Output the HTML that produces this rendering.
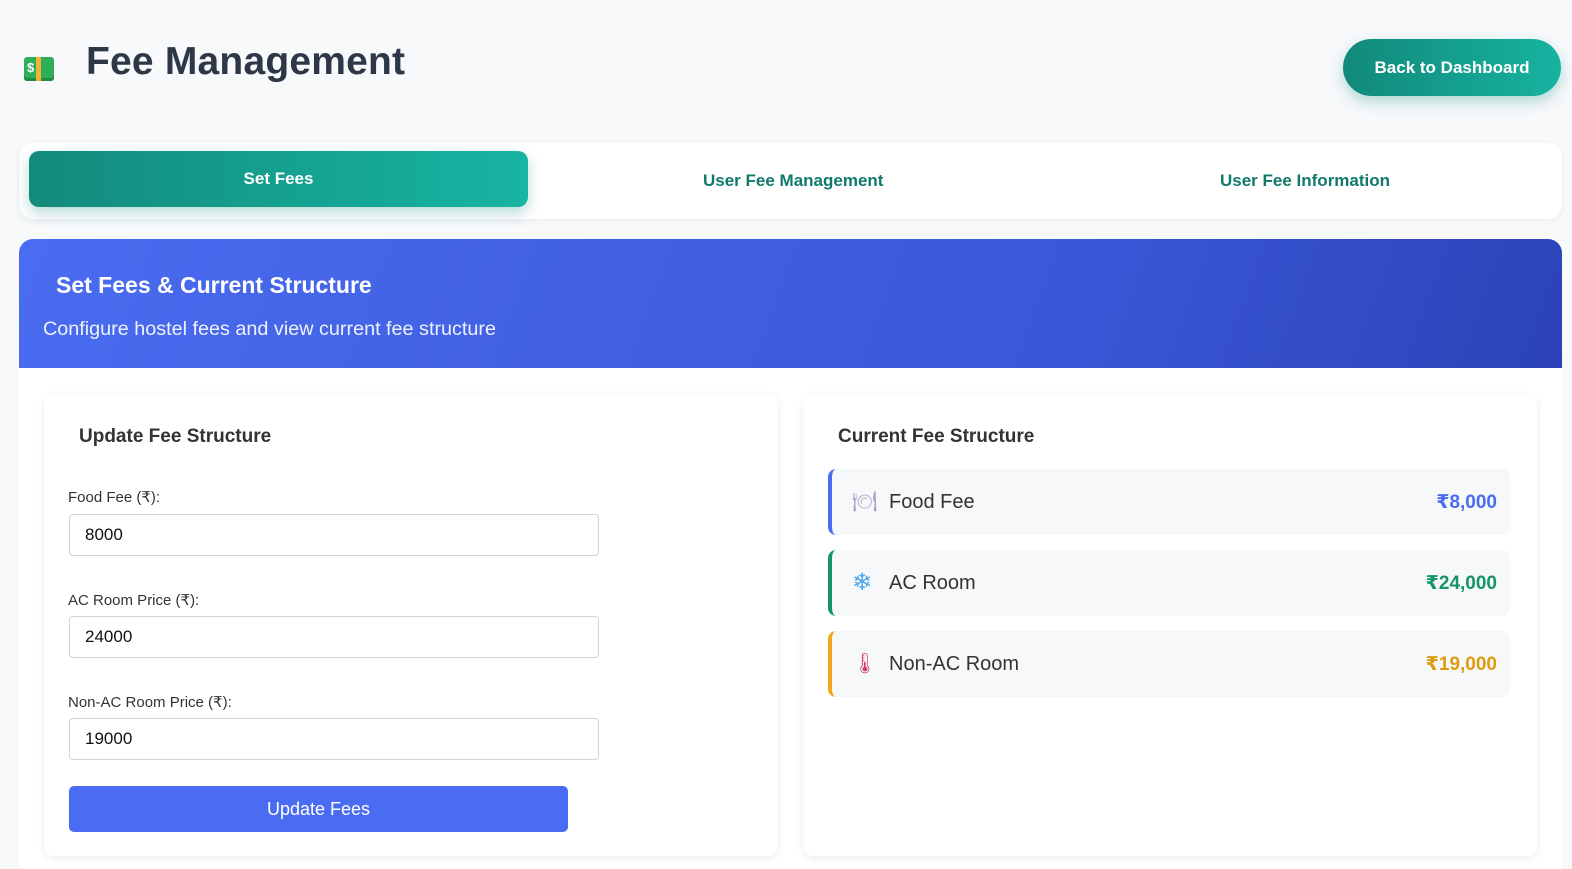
<!DOCTYPE html>
<html><head><meta charset="utf-8"><style>
*{box-sizing:border-box;margin:0;padding:0}
body{width:1572px;height:869px;overflow:hidden;background:#f7f9fb;font-family:"Liberation Sans","DejaVu Sans",sans-serif;color:#2d3748;position:relative}
.abs{position:absolute}
h1{position:absolute;left:86px;top:40px;font-size:39px;font-weight:bold;color:#2d3748;letter-spacing:0.2px}
.back{left:1343px;top:39px;width:218px;height:57px;border-radius:29px;background:linear-gradient(90deg,#11897a,#17b3a0);color:#fff;font-size:17px;font-weight:bold;text-align:center;line-height:57px;box-shadow:0 6px 14px rgba(17,137,122,.3)}
.tabs{left:19px;top:143px;width:1543px;height:76px;background:#fff;border-radius:14px;box-shadow:0 2px 8px rgba(0,0,0,.05)}
.tab1{left:29px;top:151px;width:499px;height:56px;border-radius:10px;background:linear-gradient(90deg,#138a7c,#17b5a2);color:#fff;font-weight:bold;font-size:17px;text-align:center;line-height:55px;box-shadow:0 6px 14px rgba(17,137,122,.3)}
.tabt{top:171px;font-size:17px;font-weight:bold;color:#11796c}
.hero{left:19px;top:239px;width:1543px;height:129px;border-radius:14px 14px 0 0;background:linear-gradient(110deg,#4a6cf0,#3a56d6 70%,#2b43b6)}
.main{left:19px;top:368px;width:1543px;height:501px;background:#fff}
.card{top:394px;height:462px;background:#fff;border-radius:10px;box-shadow:0 2px 8px rgba(0,0,0,.08)}
.lbl{left:68px;font-size:15px;color:#333}
.inp{left:69px;width:530px;height:42px;border:1px solid #d0d4da;border-radius:4px;font-size:17px;padding-left:15px;line-height:40px;color:#111}
.row{left:828px;width:682px;height:66px;background:#f6f8fa;border-radius:8px;border-left:4px solid}
.row .ic{position:absolute;left:20px;top:21px;font-size:20px;line-height:24px}
.row .n{position:absolute;left:57px;top:22px;font-size:20px;color:#333}
.row .v{position:absolute;right:13px;top:22px;font-size:19px;font-weight:bold}
</style></head><body>
<div class="abs" style="left:24px;top:57px;width:30px;height:24px;background:#2fae5a;border-radius:3px;box-shadow:inset 0 -3px 0 #1f8a44"><div style="position:absolute;left:12px;top:0;width:5px;height:24px;background:#f2b233"></div><span style="position:absolute;left:3px;top:3px;font-size:13px;color:#fff;font-weight:bold">$</span></div>
<h1>Fee Management</h1>
<div class="abs back">Back to Dashboard</div>
<div class="abs tabs"></div>
<div class="abs tab1">Set Fees</div>
<div class="abs tabt" style="left:703px">User Fee Management</div>
<div class="abs tabt" style="left:1220px">User Fee Information</div>
<div class="abs hero"></div>
<div class="abs" style="left:56px;top:272px;font-size:23px;font-weight:bold;color:#fff">Set Fees &amp; Current Structure</div>
<div class="abs" style="left:43px;top:318px;font-size:19.8px;color:#eef1ff">Configure hostel fees and view current fee structure</div>
<div class="abs main"></div>
<div class="abs card" style="left:44px;width:734px"></div>
<div class="abs card" style="left:803px;width:734px"></div>
<div class="abs" style="left:79px;top:426px;font-size:19px;font-weight:bold;color:#333">Update Fee Structure</div>
<div class="abs lbl" style="top:488px">Food Fee (₹):</div>
<div class="abs inp" style="top:514px">8000</div>
<div class="abs lbl" style="top:591px">AC Room Price (₹):</div>
<div class="abs inp" style="top:616px">24000</div>
<div class="abs lbl" style="top:693px">Non-AC Room Price (₹):</div>
<div class="abs inp" style="top:718px">19000</div>
<div class="abs" style="left:69px;top:786px;width:499px;height:46px;background:#4a6cf3;border-radius:5px;color:#fff;font-size:18px;text-align:center;line-height:46px">Update Fees</div>
<div class="abs" style="left:838px;top:426px;font-size:19px;font-weight:bold;color:#333">Current Fee Structure</div>
<div class="abs row" style="top:469px;border-color:#4a6cf0"><span class="ic" style="color:#a9a0c8">🍽</span><span class="n">Food Fee</span><span class="v" style="color:#4a6cf0">₹8,000</span></div>
<div class="abs row" style="top:550px;border-color:#14946b"><span class="ic" style="color:#4aa8e8;font-size:24px">❄</span><span class="n">AC Room</span><span class="v" style="color:#14946b">₹24,000</span></div>
<div class="abs row" style="top:631px;border-color:#f0a81a"><span class="ic" style="color:#d03a6a">🌡</span><span class="n">Non-AC Room</span><span class="v" style="color:#e09a10">₹19,000</span></div>
</body></html>
